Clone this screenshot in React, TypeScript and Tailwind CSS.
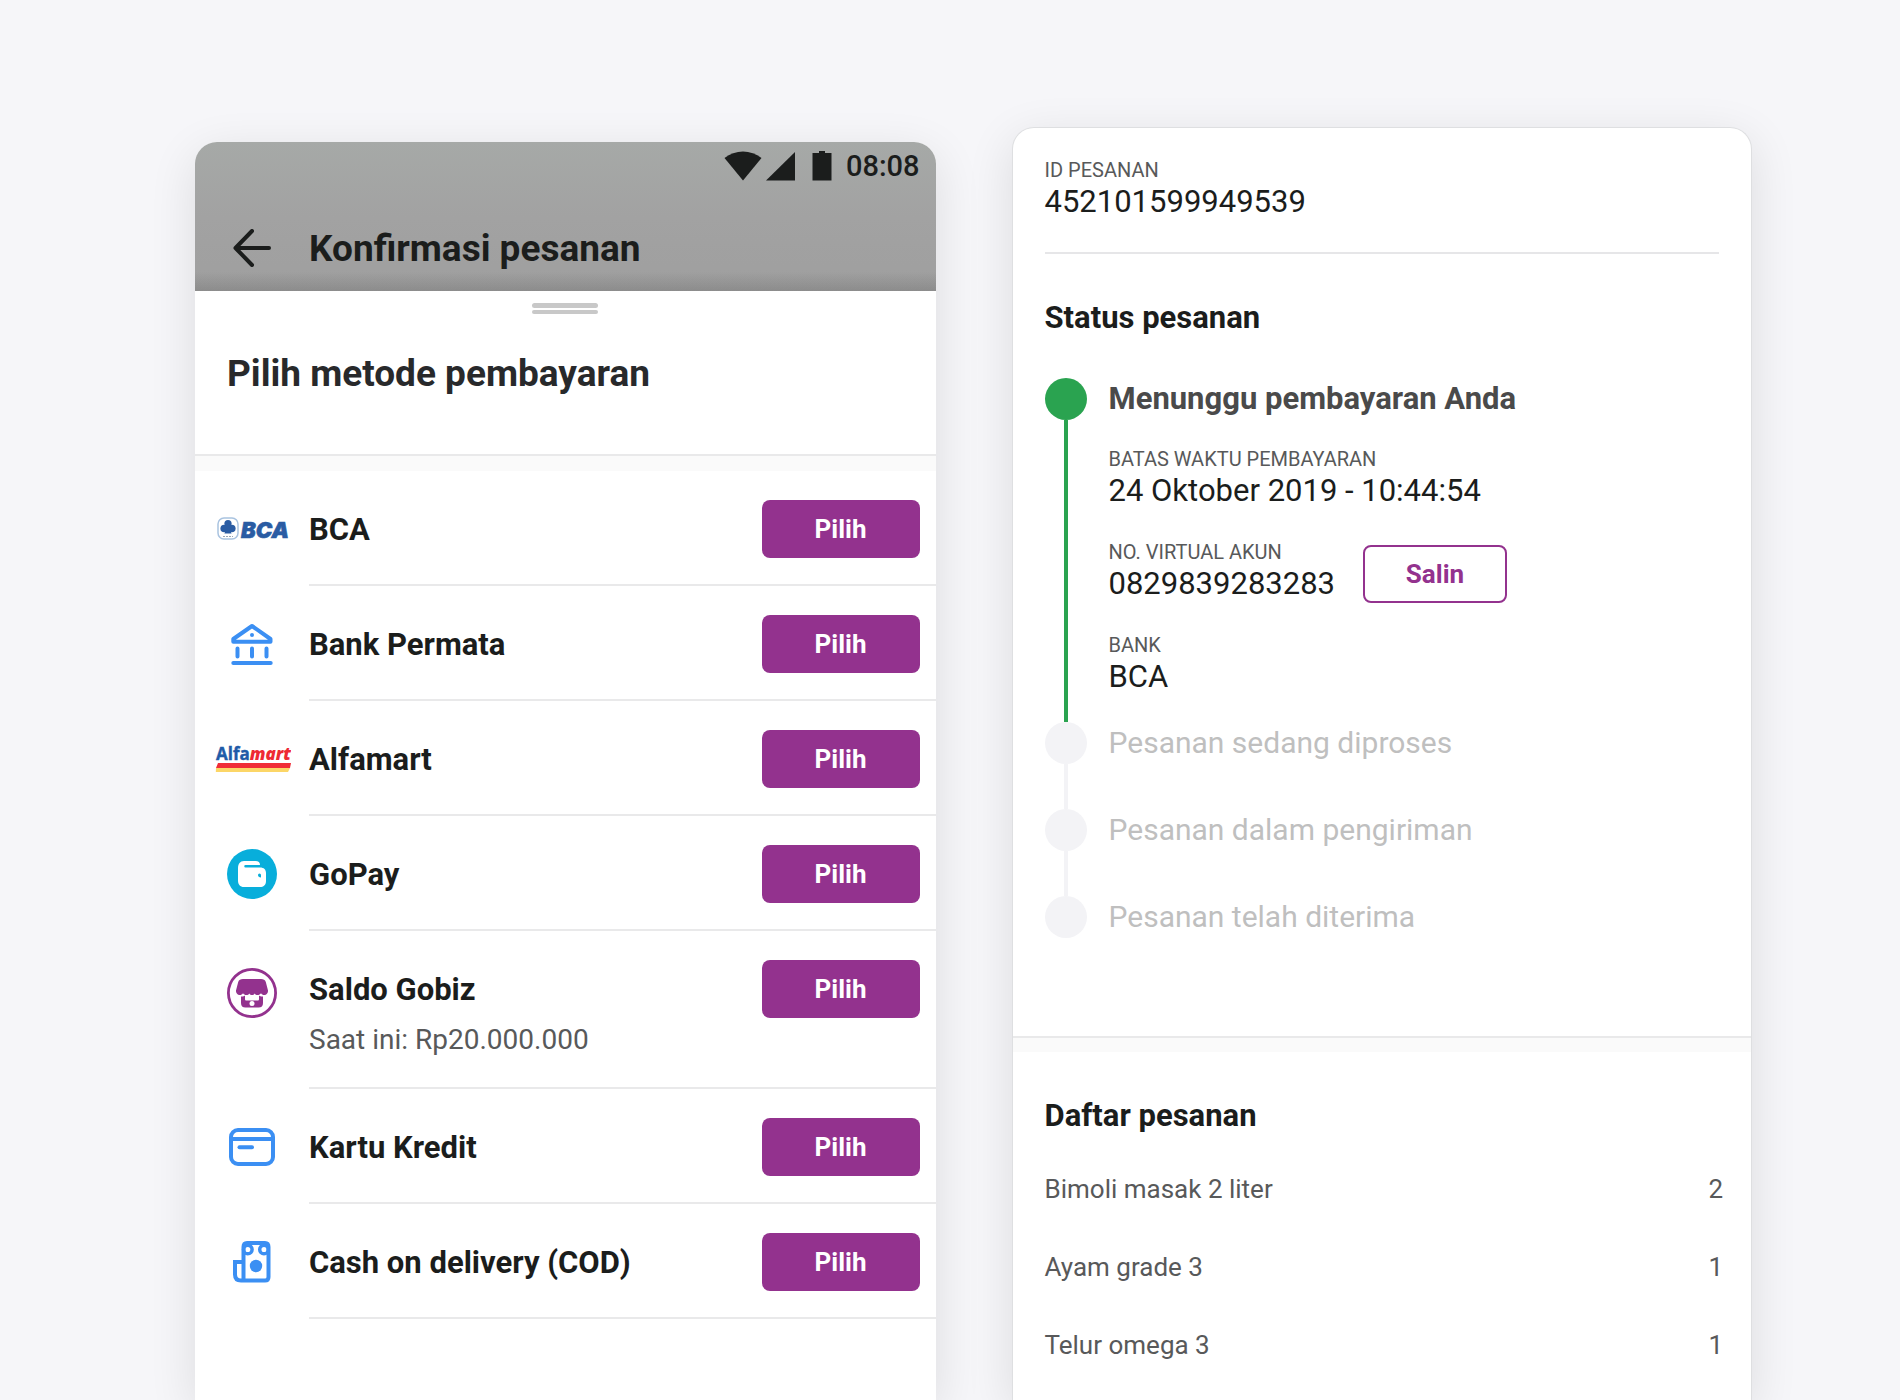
import React from 'react';

interface PaymentMethod {
  id: string;
  name: string;
  note?: string;
  icon: React.ReactNode;
}

const BcaLogo: React.FC = () => (
  <svg width="76" height="36" viewBox="0 0 76 36" role="img" aria-label="BCA">
    <rect x="4" y="7" width="20" height="21" rx="6" fill="#fff" stroke="#a9c3e0" strokeWidth="1.500" />
    <g fill="#2a5ca3">
      <circle cx="14" cy="12.500" r="3.600" />
      <circle cx="10.200" cy="17.500" r="3.800" />
      <circle cx="17.800" cy="17.500" r="3.800" />
      <path d="M12 13h4v6l1.600 3.400h-7.200L12 19z" />
    </g>
    <path d="M9 25.500h10" stroke="#9aa7b5" strokeWidth="1.200" strokeDasharray="2 1" />
    <text x="27" y="27" fontFamily="Inter, sans-serif" fontSize="22" fontWeight="900" fontStyle="italic" fill="#2a5ca3" stroke="#2a5ca3" strokeWidth=".6">BCA</text>
  </svg>
);

const BankIcon: React.FC = () => (
  <svg width="42" height="42" viewBox="0 0 42 42" fill="none" stroke="#3b8ff3" strokeWidth="4" strokeLinecap="round" strokeLinejoin="round">
    <path d="M2.300 18.800V16L21 3l18.500 13v2.800z" />
    <circle cx="21" cy="12" r="2" fill="#3b8ff3" stroke="none" />
    <path d="M6.500 25.500v8M21 25.500v8M35.500 25.500v8M2.300 40h37.400" />
  </svg>
);

const AlfamartLogo: React.FC = () => (
  <svg width="78" height="36" viewBox="0 0 78 36" role="img" aria-label="Alfamart">
    <text x="3" y="19" fontFamily="'Open Sans', sans-serif" fontSize="17" fontWeight="700" fill="#1f5ba8" stroke="#1f5ba8" strokeWidth=".4">
      Alfa
      <tspan fontWeight="800" fontStyle="italic" fill="#ee2a33" stroke="none">mart</tspan>
    </text>
    <path d="M5 22h73l-1 5H3z" fill="#f02d37" />
    <path d="M3 27h74l-2 4H2.800z" fill="#fcd667" />
  </svg>
);

const GoPayIcon: React.FC = () => (
  <svg width="50" height="50" viewBox="0 0 50 50">
    <circle cx="25" cy="25" r="25" fill="#08aedb" />
    <path d="M17 12h11.500c3 0 4.500 1.500 4.500 4H18.500a1.200 1.200 0 0 0 0 2.500H33c4 0 6 2 6 6V32c0 4-2.500 6-6 6H17c-4 0-6-2.500-6-6.500V19c0-4 2-7 6-7z" fill="#fff" />
    <path d="M31 26a1.500 1.500 0 0 1 3 0v2.500c-2 0-3-1-3-2.500z" fill="#08aedb" />
  </svg>
);

const GoBizIcon: React.FC = () => (
  <svg width="50" height="58" viewBox="0 0 50 58">
    <circle cx="25" cy="33" r="23.600" fill="#fff" stroke="#93328e" strokeWidth="2.800" />
    <path d="M16 19h18c2.500 0 4 .8 4.800 3L41 30.500c.3 2.500-1.500 4.500-3.500 4.500-1.800 0-2.800-.8-3.500-1.800-.8 1.200-2 1.800-3.400 1.800-1.300 0-2.300-.6-2.900-1.600C27 34.500 26.200 35 25 35s-2-.5-2.700-1.600c-.6 1-1.600 1.600-2.900 1.600-1.400 0-2.600-.6-3.400-1.800-.7 1-1.700 1.800-3.500 1.800-2 0-3.800-2-3.500-4.500l2.200-8.500c.8-2.200 2.300-3 4.800-3z" fill="#93328e" />
    <path d="M14 36.500c1.800.2 3-.3 4-1V39c0 1 .5 1.500 1.500 1.500h11c1 0 1.500-.5 1.500-1.500v-3.500c1 .7 2.200 1.200 4 1V43c0 3-1.500 4.500-4.500 4.500h-13c-3 0-4.500-1.500-4.500-4.500z" fill="#93328e" />
    <circle cx="25" cy="43.500" r="2.500" fill="#fff" />
  </svg>
);

const CardIcon: React.FC = () => (
  <svg width="46" height="38" viewBox="0 0 46 38" fill="none" stroke="#3b8ff3" strokeWidth="4" strokeLinecap="round">
    <rect x="2" y="2" width="42" height="34" rx="7" />
    <path d="M3 11h40" strokeLinecap="butt" />
    <path d="M10.500 19.200h12.500" />
  </svg>
);

const CashIcon: React.FC = () => (
  <svg width="38" height="42" viewBox="0 0 38 42" fill="none" stroke="#3b8ff3" strokeWidth="4">
    <path d="M10.500 39.500V6c0-2.500 1-4 3.500-4h18c2.500 0 3.500 1.500 3.500 4v30c0 2.500-1 3.500-3.500 3.500H8c-4 0-6-2-6-6V21h8.500" />
    <circle cx="14.800" cy="8.500" r="4.300" strokeWidth="3.500" />
    <circle cx="31" cy="8.500" r="4.300" strokeWidth="3.500" />
    <circle cx="23" cy="25" r="6.200" fill="#3b8ff3" stroke="none" />
  </svg>
);

const methods: PaymentMethod[] = [
  { id: 'bca', name: 'BCA', icon: <BcaLogo /> },
  { id: 'permata', name: 'Bank Permata', icon: <BankIcon /> },
  { id: 'alfamart', name: 'Alfamart', icon: <AlfamartLogo /> },
  { id: 'gopay', name: 'GoPay', icon: <GoPayIcon /> },
  { id: 'gobiz', name: 'Saldo Gobiz', note: 'Saat ini: Rp20.000.000', icon: <GoBizIcon /> },
  { id: 'card', name: 'Kartu Kredit', icon: <CardIcon /> },
  { id: 'cod', name: 'Cash on delivery (COD)', icon: <CashIcon /> },
];

const nextSteps = ['Pesanan sedang diproses', 'Pesanan dalam pengiriman', 'Pesanan telah diterima'];

const orderItems = [
  { name: 'Bimoli masak 2 liter', qty: 2 },
  { name: 'Ayam grade 3', qty: 1 },
  { name: 'Telur omega 3', qty: 1 },
];

const StatusBar: React.FC = () => (
  <div className="flex h-12 items-center justify-end pr-4">
    <svg width="38" height="30" viewBox="0 0 38 30" fill="#1b1d1c">
      <path d="M.5 7C11-1.700 27-1.700 37.500 7L19 29.500z" />
    </svg>
    <svg className="ml-1" width="30" height="30" viewBox="0 0 30 30" fill="#1b1d1c">
      <path d="M29 1v28.500H0z" />
    </svg>
    <svg className="ml-4" width="20" height="30" viewBox="0 0 20 30" fill="#1b1d1c">
      <path d="M7 0h6v2h6.500v27.500H.5V2H7z" />
    </svg>
    <span className="ml-[14px] text-[29px] leading-none font-medium">08:08</span>
  </div>
);

const MethodRow: React.FC<{ method: PaymentMethod }> = ({ method }) => (
  <li className="flex">
    <div className="flex w-[114px] shrink-0 items-start justify-center pt-[29px]">
      <span className="flex h-[58px] items-center">{method.icon}</span>
    </div>
    <div className="grow border-b-2 border-[#e9e9ea] pt-[29px] pr-4 pb-[26px]">
      <div className="flex h-[58px] items-center justify-between">
        <h3 className="text-[31px] leading-none font-bold">{method.name}</h3>
        <button type="button" className="h-[58px] w-[158px] rounded-lg bg-[#93328e] text-[26px] font-bold text-white">
          Pilih
        </button>
      </div>
      {method.note && <p className="text-[28px] leading-[43px] text-[#58595a]">{method.note}</p>}
    </div>
  </li>
);

const PaymentSheet: React.FC = () => (
  <section className="overflow-hidden rounded-t-[22px] bg-white shadow-[0_12px_48px_rgba(0,0,0,0.11)]">
    <header className="bg-linear-to-b from-[#a6a9a7] via-[#a2a2a2] to-[#9f9f9f]">
      <StatusBar />
      <div className="mt-[34px] flex h-12 items-center">
        <button type="button" aria-label="Kembali" className="flex w-[114px] justify-center">
          <svg width="38" height="38" viewBox="0 0 38 38" fill="none" stroke="#1b1d1c" strokeWidth="4" strokeLinecap="round" strokeLinejoin="round">
            <path d="M19 2L2.500 19 19 36M2.500 19H36" />
          </svg>
        </button>
        <h1 className="text-[37px] leading-none font-bold">Konfirmasi pesanan</h1>
      </div>
      <div className="h-[19px] bg-linear-to-b from-transparent to-black/12" />
    </header>
    <div className="flex flex-col items-center gap-[2px] pt-3">
      <span className="h-[5px] w-[66px] rounded-full bg-[#c8c8c8]" />
      <span className="h-1 w-[66px] rounded-full bg-[#c8c8c8]" />
    </div>
    <h2 className="mt-[38px] mb-[58px] px-8 text-[37px] leading-[44px] font-bold text-[#28292b]">Pilih metode pembayaran</h2>
    <div className="h-[17px] border-t-2 border-[#e9e9ea] bg-[#fafafa]" />
    <ul>
      {methods.map((method) => (
        <MethodRow key={method.id} method={method} />
      ))}
    </ul>
  </section>
);

const Field: React.FC<{ label: string; value: string }> = ({ label, value }) => (
  <div>
    <dt className="text-[20px] leading-7 text-[#58595a]">{label}</dt>
    <dd className="text-[31px] leading-9">{value}</dd>
  </div>
);

const OrderCard: React.FC = () => (
  <section className="rounded-t-[22px] border border-b-0 border-[#dedfe1] bg-white shadow-[0_12px_48px_rgba(0,0,0,0.11)]">
    <div className="px-8 pt-7 pb-[98px]">
      <dl className="border-b-2 border-[#e6e6e8] pb-8">
        <Field label="ID PESANAN" value="452101599949539" />
      </dl>
      <h2 className="mt-11 text-[31px] leading-10 font-bold">Status pesanan</h2>
      <ol className="mt-10">
        <li className="flex gap-[22px]">
          <div className="flex w-[42px] flex-col items-center">
            <span className="size-[42px] rounded-full bg-[#2aa350]" />
            <span className="w-1 grow bg-[#2aa350]" />
          </div>
          <div className="pb-[27px]">
            <h3 className="text-[31px] leading-[42px] font-bold text-[#4a4a4a]">Menunggu pembayaran Anda</h3>
            <dl className="mt-[25px] flex flex-col gap-[29px]">
              <Field label="BATAS WAKTU PEMBAYARAN" value="24 Oktober 2019 - 10:44:54" />
              <div className="flex h-16 gap-7">
                <Field label="NO. VIRTUAL AKUN" value="0829839283283" />
                <button type="button" className="mt-[7px] h-[58px] w-36 rounded-lg border-2 border-[#93328e] text-[26px] font-bold text-[#93328e]">
                  Salin
                </button>
              </div>
              <Field label="BANK" value="BCA" />
            </dl>
          </div>
        </li>
        {nextSteps.map((step, i) => (
          <li key={step} className="flex gap-[22px]">
            <div className="flex flex-col items-center">
              <span className="size-[42px] rounded-full bg-[#f3f3f6]" />
              {i < nextSteps.length - 1 && <span className="h-[45px] w-1 bg-[#f3f3f6]" />}
            </div>
            <p className="text-[30px] leading-[42px] text-[#bfbfbf]">{step}</p>
          </li>
        ))}
      </ol>
    </div>
    <div className="h-4 border-t-2 border-[#e9e9ea] bg-[#fafafa]" />
    <div className="pt-11 pr-7 pl-8">
      <h2 className="text-[31px] leading-10 font-bold">Daftar pesanan</h2>
      <ul className="mt-[14px]">
        {orderItems.map((item) => (
          <li key={item.name} className="flex h-[78px] items-center justify-between text-[26px] text-[#58595a]">
            <span>{item.name}</span>
            <span>{item.qty}</span>
          </li>
        ))}
      </ul>
    </div>
  </section>
);

const App: React.FC = () => {
  return (
    <main className="grid min-h-screen grid-cols-2 gap-[76px] overflow-hidden bg-[#f6f6f9] pt-[127px] pr-[148px] pl-[195px] font-[Roboto,sans-serif] text-[#1b1d1c]">
      <div className="grid pt-[15px]">
        <PaymentSheet />
      </div>
      <OrderCard />
    </main>
  );
};

export default App;
